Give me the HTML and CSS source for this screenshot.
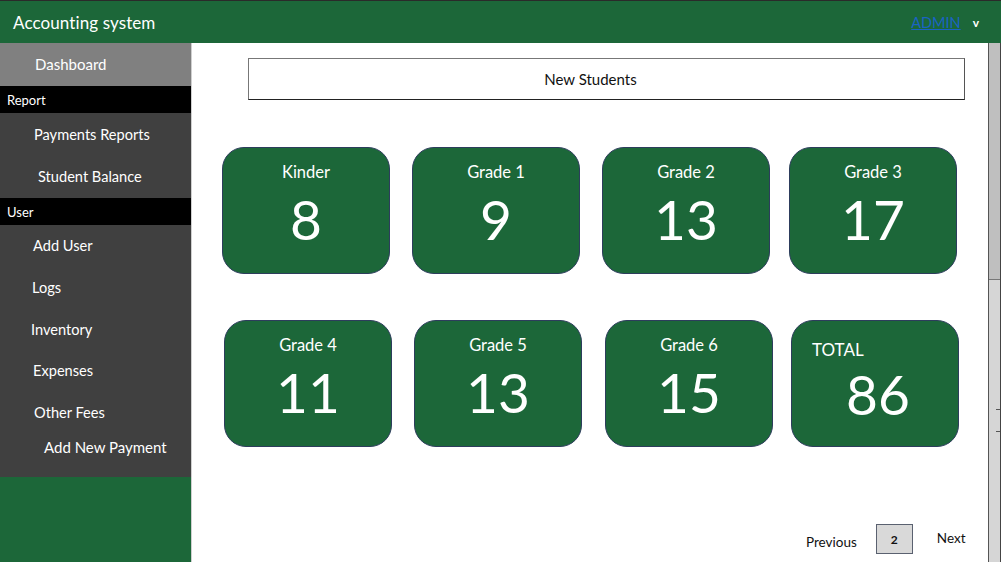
FILE: index.html
```html
<!DOCTYPE html>
<html>
<head>
<meta charset="utf-8">
<link rel="stylesheet" href="styles.css">
</head>
<body>
<div class="app">
  <header class="topbar">
    <div class="brand">Accounting system</div>
    <div class="user"><a class="admin" href="#">ADMIN</a><span class="caret">v</span></div>
  </header>
  <div class="body">
    <nav class="sidebar">
      <div class="nav-item dash">Dashboard</div>
      <div class="section">Report</div>
      <div class="group">
        <div class="nav-item i-pay">Payments Reports</div>
        <div class="nav-item i-bal">Student Balance</div>
      </div>
      <div class="section">User</div>
      <div class="group users">
        <div class="nav-item i-add">Add User</div>
        <div class="nav-item i-logs">Logs</div>
        <div class="nav-item i-inv">Inventory</div>
        <div class="nav-item i-exp">Expenses</div>
        <div class="nav-item i-oth">Other Fees</div>
        <div class="nav-item i-new">Add New Payment</div>
      </div>
      <div class="fill"></div>
    </nav>
    <main class="main">
      <div class="title-box">New Students</div>
      <div class="row row1">
        <div class="card"><div class="label">Kinder</div><div class="num">8</div></div>
        <div class="card"><div class="label">Grade 1</div><div class="num">9</div></div>
        <div class="card"><div class="label">Grade 2</div><div class="num">13</div></div>
        <div class="card"><div class="label">Grade 3</div><div class="num">17</div></div>
      </div>
      <div class="row row2">
        <div class="card"><div class="label">Grade 4</div><div class="num">11</div></div>
        <div class="card"><div class="label">Grade 5</div><div class="num">13</div></div>
        <div class="card"><div class="label">Grade 6</div><div class="num">15</div></div>
        <div class="card total"><div class="label">TOTAL</div><div class="num">86</div></div>
      </div>
      <div class="pager">
        <span class="prev">Previous</span>
        <span class="page">2</span>
        <span class="next">Next</span>
      </div>
    </main>
    <div class="scrollbar">
      <div class="thumb"></div>
      <div class="track"><span class="tick t1"></span><span class="tick t2"></span></div>
    </div>
  </div>
</div>
</body>
</html>
```
FILE: styles.css
```css
* { box-sizing: border-box; }
html, body { margin: 0; padding: 0; }
body {
  width: 1001px;
  height: 562px;
  overflow: hidden;
  font-family: Lato, "Open Sans", sans-serif;
  background: #fff;
}
.app { display: flex; flex-direction: column; height: 562px; }
.topbar {
  height: 43px;
  background: #1c6739;
  border-top: 1px solid #2a2a2a;
  display: flex;
  align-items: center;
  justify-content: space-between;
  padding: 0 22px 0 13px;
  color: #fff;
}
.brand { font-size: 17px; letter-spacing: 0.1px; }
.user { display: flex; align-items: center; gap: 12px; }
.admin { color: #1a63c4; font-size: 14.5px; text-decoration: underline; }
.caret { font-size: 12px; font-weight: 700; color: #fff; }
.body { flex: 1; display: flex; min-height: 0; }
.sidebar {
  width: 192px;
  display: flex;
  flex-direction: column;
  background: #404040;
  border-right: 1px solid #cfcfcf;
  color: #fff;
  font-size: 14.6px;
}
.nav-item { height: 42px; display: flex; align-items: center; }
.dash { height: 43px; background: #808080; padding-left: 35px; padding-bottom: 2px; font-size: 15px; }
.section {
  height: 27px;
  background: #000;
  display: flex;
  align-items: center;
  padding-left: 7px;
  font-size: 13px;
}
.group { background: #404040; }
.i-pay { padding-left: 34px; height: 43px; }
.i-bal { padding-left: 38px; height: 42px; padding-bottom: 2px; }
.users { padding-bottom: 16px; }
.i-add { padding-left: 33px; height: 40px; }
.i-logs { padding-left: 32px; height: 44px; }
.i-inv { padding-left: 31px; height: 40px; }
.i-exp { padding-left: 33px; height: 43px; }
.i-oth { padding-left: 34px; height: 41px; }
.i-new { padding-left: 44px; height: 28px; font-size: 15px; }
.fill { flex: 1; background: #1c6739; }
.main {
  flex: 1;
  display: flex;
  flex-direction: column;
  padding-top: 15px;
}
.title-box {
  margin-left: 56px;
  width: 717px;
  height: 42px;
  padding-right: 32px;
  border: 1px solid #777;
  border-bottom-color: #222;
  border-right-color: #555;
  display: flex;
  align-items: center;
  justify-content: center;
  font-size: 15px;
  color: #111;
}
.row { display: flex; }
.row1 { margin-top: 47px; margin-left: 30px; gap: 21px; }
.row1 .card:nth-child(2) { margin-left: 1px; }
.row1 .card:nth-child(3) { margin-left: 1px; }
.row1 .card:nth-child(4) { margin-left: -2px; }
.row2 { margin-top: 46px; margin-left: 32px; gap: 22px; }
.row2 .card:nth-child(3) { margin-left: 1px; }
.row2 .card:nth-child(4) { margin-left: -4px; }
.card {
  width: 168px;
  height: 127px;
  background: #1c6739;
  border: 1px solid #2d3d5c;
  border-radius: 22px;
  color: #fff;
  display: flex;
  flex-direction: column;
  align-items: center;
}
.label { font-size: 16.5px; margin-top: 13px; line-height: 22px; }
.num { font-size: 55px; line-height: 60px; margin-top: 6px; }
.total { align-items: flex-start; }
.total .label { margin-left: 20px; margin-top: 18px; font-size: 17px; }
.total .num { margin-left: 54px; margin-top: 3px; }
.pager {
  margin-top: 77px;
  margin-left: 614px;
  display: flex;
  align-items: center;
  font-size: 13.5px;
  color: #111;
}
.prev { margin-top: 6px; }
.page {
  margin-left: 19px;
  width: 37px;
  height: 30px;
  background: #d9d9d9;
  border: 1px solid #5a6170;
  display: flex;
  align-items: center;
  justify-content: center;
  font-size: 12px;
  font-weight: 700;
}
.next { margin-left: 24px; margin-top: -2px; }
.scrollbar {
  width: 13px;
  display: flex;
  flex-direction: column;
  border-left: 1px solid #555;
  border-right: 1px solid #444;
}
.thumb { height: 237px; background: #bfbfbf; border-bottom: 1px solid #777; }
.track { flex: 1; background: #d6d6d6; position: relative; }
.tick { position: absolute; left: 7px; width: 4px; height: 1px; background: #555; }
.t1 { top: 129px; }
.t2 { top: 151px; }
```
